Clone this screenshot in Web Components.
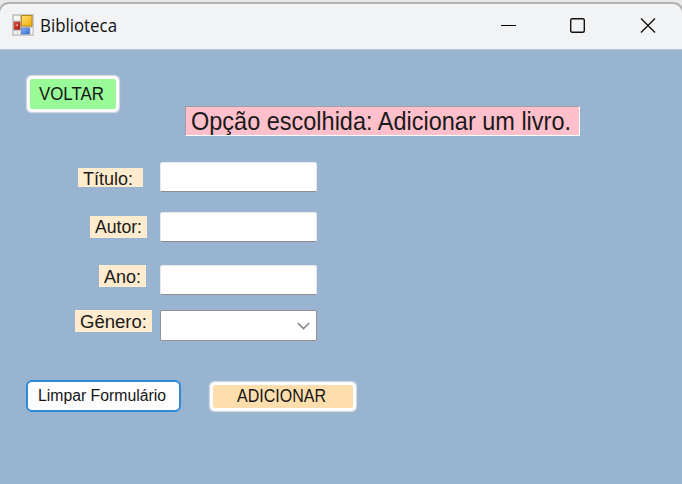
<!DOCTYPE html>
<html lang="pt-BR">
<head>
<meta charset="utf-8">
<title>Biblioteca</title>
<style>
html, body { margin: 0; height: 100%; overflow: hidden; background: #e8e8e8; }
</style>
</head>
<body>
<app-window></app-window>
<script>
const attach = (el, html) => {
  const t = document.createElement('template');
  t.innerHTML = html;
  const root = el.attachShadow({ mode: 'open' });
  root.appendChild(t.content.cloneNode(true));
  return root;
};

// Single line of text condensed or widened to the width in its "w" attribute.
class FitText extends HTMLElement {
  connectedCallback() {
    const w = +this.getAttribute('w');
    const root = attach(this, `<style>
      :host { display: block; white-space: nowrap; width: ${w}px; }
      span { display: inline-block; transform-origin: 0 50%; }
    </style><span><slot></slot></span>`);
    const s = root.querySelector('span');
    s.style.transform = `scaleX(${w / s.getBoundingClientRect().width})`;
  }
}

class TitleBar extends HTMLElement {
  connectedCallback() {
    attach(this, `<style>
      :host { display: flex; align-items: center; box-sizing: border-box; flex: none;
        margin: 0 -2px; padding: 0 14px 4px 14px; background: #f1f3f5; border: 2px solid #b2b2b2; border-bottom: 1px solid #b9c7d8;
        border-radius: 11px 11px 0 0; font: 18px/24px "Open Sans", "Noto Sans", sans-serif; color: #111; }
      svg { display: block; flex: none; }
      fit-text { margin: 0 auto 0 6px; }
      .controls { display: flex; gap: 54px; margin-right: 12px; }
    </style>
    <svg style="margin-left:-2px" width="22" height="22" viewBox="0 0 22 22">
      <defs>
        <linearGradient id="y" x2="1" y2="1"><stop stop-color="#ffe478"/><stop offset="1" stop-color="#efaa00"/></linearGradient>
        <linearGradient id="r" x2="1" y2="1"><stop stop-color="#e2574b"/><stop offset="1" stop-color="#a91409"/></linearGradient>
        <linearGradient id="b" x2="1" y2="1"><stop stop-color="#86aff5"/><stop offset="1" stop-color="#3c6fd8"/></linearGradient>
      </defs>
      <rect width="22" height="22" fill="#c9c9c9"/>
      <rect x="2" y="2" width="6" height="4.5" fill="#f6f6f6"/>
      <rect x="2" y="17" width="3" height="3" fill="#f6f6f6"/><rect x="6" y="17" width="2" height="3" fill="#f6f6f6"/>
      <rect x="18.5" y="14" width="2" height="6" fill="#f6f6f6"/>
      <rect x="9.5" y="1.5" width="10.5" height="10.5" fill="url(#y)" stroke="#b98a10"/>
      <rect x="2" y="8" width="6" height="7.5" fill="url(#r)" stroke="#a9352c" stroke-width=".6"/>
      <rect x="4.2" y="10.3" width="1.8" height="1.8" fill="#f3a59d"/>
      <rect x="9.4" y="14" width="8" height="6" fill="url(#b)" stroke="#4a74c9" stroke-width=".6"/>
    </svg>
    <fit-text w="77">Biblioteca</fit-text>
    <div class="controls">
      <svg width="15" height="16" viewBox="0 0 15 16"><path d="M0 8.5H15" stroke="#000"/></svg>
      <svg width="15" height="16" viewBox="0 0 15 16"><rect x=".7" y="1.7" width="13.6" height="13.6" rx="1.5" fill="none" stroke="#111" stroke-width="1.4"/></svg>
      <svg style="margin-left:1px" width="16" height="16" viewBox="0 0 16 16"><path d="M1 1.5L15 15.5M15 1.5L1 15.5" stroke="#111" stroke-width="1.4"/></svg>
    </div>`);
  }
}

class FormButton extends HTMLElement {
  connectedCallback() {
    attach(this, `<style>
      :host { display: flex; align-items: center; box-sizing: border-box;
        border: 3px solid #fdfdfd; border-radius: 5px; box-shadow: 0 0 1px 0.5px #d5dbe2; font-size: 18px; line-height: 20px; color: #151515; }
      :host([kind="back"]) { width: 92px; height: 36px; padding-left: 9px; background: #98fb98; }
      :host([kind="add"]) { width: 146px; height: 29px; padding: 0 0 0 24px; background: #ffdead; }
      :host([kind="clear"]) { width: 155px; height: 32px; padding-left: 10px; background: #fdfdfd; border: 2px solid #2f8ad6;
        border-radius: 6px; box-shadow: none; font-size: 16px; }
    </style><slot></slot>`);
  }
}

class BookHeading extends HTMLElement {
  connectedCallback() {
    attach(this, `<style>
      :host { display: block; box-sizing: border-box; width: 395px; height: 30px; padding-left: 5px; background: #ffc0cb;
        border: solid; border-width: 1px 1.5px 1px 1px; border-color: #a0a0a0 #fff #fff #a0a0a0; font-size: 25px; line-height: 29px; }
    </style><slot></slot>`);
  }
}

class FieldLabel extends HTMLElement {
  connectedCallback() {
    attach(this, `<style>
      :host { display: flex; align-items: center; box-sizing: border-box; padding: 2px 0 0 5px; background: #ffebcd;
        font-size: 18px; line-height: 20px; }
    </style><slot></slot>`);
  }
}

class TextField extends HTMLElement {
  connectedCallback() {
    attach(this, `<style>
      :host { display: block; box-sizing: border-box; width: 157px; height: 30px; background: #fff; border: 1px solid #e6e9ed;
        border-bottom: 1.5px solid #8e8e8e; border-radius: 2.5px; }
    </style>`);
  }
}

class GenreSelect extends HTMLElement {
  connectedCallback() {
    attach(this, `<style>
      :host { display: flex; align-items: center; justify-content: flex-end; box-sizing: border-box; width: 157px; height: 31px;
        padding-right: 6px; background: #fff; border: 1px solid #929292; border-radius: 2px; }
    </style><svg width="13" height="8" viewBox="0 0 13 8"><path d="M.8 1L6.5 6.6L12.2 1" fill="none" stroke="#858585" stroke-width="1.6"/></svg>`);
  }
}

class BookForm extends HTMLElement {
  connectedCallback() {
    attach(this, `<style>
      :host { display: block; flex: 1; padding: 26px 0 0 27px; font-family: "Liberation Sans", Arial, sans-serif; color: #1a1a1a; }
      .top { display: flex; align-items: flex-start; }
      book-heading { margin: 30px 0 0 66px; }
      .fields { display: grid; grid-template-columns: 125px 157px; column-gap: 8px; grid-template-rows: 50px 53px 45px 31px; margin-top: 26px; }
      field-label { justify-self: end; }
      .actions { display: flex; align-items: center; gap: 29px; margin: 39px 0 0 -1px; }
    </style>
    <div class="top">
      <form-button kind="back"><fit-text w="65">VOLTAR</fit-text></form-button>
      <book-heading><fit-text w="380">Opção escolhida: Adicionar um livro.</fit-text></book-heading>
    </div>
    <div class="fields">
      <field-label style="width:65px;height:19px;margin:6px 9px 0 0"><fit-text w="50">Título:</fit-text></field-label><text-field></text-field>
      <field-label style="width:57px;height:22px;padding-top:0;margin:4px 5px 0 0"><fit-text w="47">Autor:</fit-text></field-label><text-field></text-field>
      <field-label style="width:47px;height:22px;margin:0 6px 0 0"><fit-text w="37">Ano:</fit-text></field-label><text-field></text-field>
      <field-label style="width:77px;height:22px"><fit-text w="67">Gênero:</fit-text></field-label><genre-select></genre-select>
    </div>
    <div class="actions">
      <form-button kind="clear"><fit-text w="128">Limpar Formulário</fit-text></form-button>
      <form-button kind="add"><fit-text w="89">ADICIONAR</fit-text></form-button>
    </div>`);
  }
}

class AppWindow extends HTMLElement {
  connectedCallback() {
    attach(this, `<style>
      :host { display: flex; flex-direction: column; box-sizing: border-box; width: 682px; height: 484px; overflow: hidden; }
      title-bar { margin-top: 2px; height: 48px; }
      book-form { background: #99b4d1; }
    </style><title-bar></title-bar><book-form></book-form>`);
  }
}

customElements.define('fit-text', FitText);
customElements.define('title-bar', TitleBar);
customElements.define('form-button', FormButton);
customElements.define('book-heading', BookHeading);
customElements.define('field-label', FieldLabel);
customElements.define('text-field', TextField);
customElements.define('genre-select', GenreSelect);
customElements.define('book-form', BookForm);
customElements.define('app-window', AppWindow);
</script>
</body>
</html>
